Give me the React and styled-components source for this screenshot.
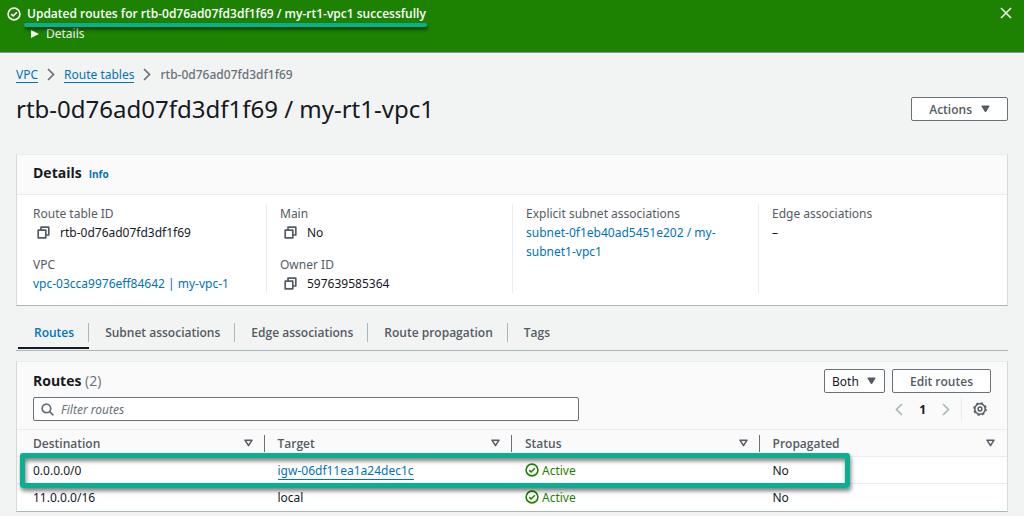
import React, { useState } from "react";
import styled, { createGlobalStyle } from "styled-components";

const boldFont = '"Open Sans", "Noto Sans", sans-serif';

const GlobalStyle = createGlobalStyle`
  * {
    box-sizing: border-box;
  }
  body {
    margin: 0;
    background: #f2f3f3;
    color: #16191f;
    font-family: "Noto Sans", "Open Sans", sans-serif;
    font-size: 12px;
    line-height: 19px;
  }
  button, input, select {
    font: inherit;
    color: inherit;
  }
  svg {
    display: block;
    flex: none;
  }
`;

const Banner = styled.header`
  display: flex;
  align-items: flex-start;
  gap: 6px;
  height: 53px;
  padding: 4px 12px 0 7px;
  background: #1d8102;
  border-bottom: 1px solid #879596;
  color: #fff;
  svg {
    margin-top: 3px;
  }
`;

const BannerBody = styled.div`
  flex: 1;
`;

const BannerTitle = styled.div`
  position: relative;
  width: fit-content;
  font-family: ${boldFont};
  font-weight: 600;
`;

const Underline = styled.span`
  position: absolute;
  left: -3px;
  right: -1px;
  top: 19px;
  height: 4px;
  border-radius: 2px;
  background: #0aae90;
  box-shadow: 1px 3px 3px rgba(0, 0, 0, 0.45);
`;

const PlainButton = styled.button`
  display: flex;
  align-items: center;
  padding: 0;
  border: 0;
  background: none;
  cursor: pointer;
`;

const DetailsToggle = styled(PlainButton)`
  gap: 7px;
  padding: 1px 0 0 4px;
  color: #f2f3f3;
  svg {
    margin-top: 0;
  }
`;

const Page = styled.main`
  padding: 12px 16px 4px;
`;

const Breadcrumbs = styled.nav`
  display: flex;
  align-items: center;
  gap: 9px;
  color: #687078;
  font-weight: 500;
`;

const Link = styled.a`
  color: #0073bb;
  text-decoration: none;
  font-weight: 400;
  border-bottom: ${({ $underlined }) => ($underlined ? "1px solid" : "0")};
  line-height: ${({ $underlined }) => ($underlined ? "15px" : "inherit")};
`;

const TitleRow = styled.div`
  display: flex;
  align-items: center;
  justify-content: space-between;
  height: 50px;
`;

const Title = styled.h1`
  margin: 0;
  font-size: 24px;
  line-height: 30px;
  font-weight: 400;
`;

const Button = styled.button`
  display: flex;
  align-items: center;
  justify-content: center;
  gap: 9px;
  height: 24px;
  padding: 0 17px;
  border: 1px solid #687078;
  border-radius: 2px;
  background: #fff;
  color: #545b64;
  font-family: ${boldFont};
  font-weight: 600;
  cursor: pointer;
`;

const Card = styled.section`
  background: #fff;
  border: 1px solid #d5dbdb;
  border-top-color: #eaeded;
  border-bottom-color: #aab7b8;
`;

const DetailsCard = styled(Card)`
  margin-top: 20px;
`;

const DetailsHeader = styled.div`
  display: flex;
  align-items: baseline;
  gap: 7px;
  padding: 8px 16px 10px;
  background: #fafafa;
  border-bottom: 1px solid #eaeded;
`;

const CardTitle = styled.h2`
  margin: 0;
  font-family: ${boldFont};
  font-size: 14px;
  line-height: 20px;
  font-weight: 700;
  span {
    color: #687078;
    font-weight: 400;
  }
`;

const InfoLink = styled(Link)`
  font-family: ${boldFont};
  font-size: 10px;
  font-weight: 700;
`;

const DetailsGrid = styled.div`
  display: grid;
  grid-template-columns: repeat(4, 1fr);
  padding: 9px 3px 12px;
`;

const Column = styled.dl`
  display: flex;
  flex-direction: column;
  gap: 13px;
  margin: 0;
  padding: 0 28px 0 13px;
  & + & {
    border-left: 1px solid #eaeded;
  }
  dt {
    color: #545b64;
  }
  dd {
    display: flex;
    align-items: center;
    margin: 0;
  }
`;

const CopyButton = styled(PlainButton)`
  margin: 0 10px 0 4px;
  color: #545b64;
`;

const Tabs = styled.div`
  display: flex;
  margin-top: 17px;
  padding-bottom: 1px;
  border-bottom: 1px solid #aab7b8;
`;

const Tab = styled.button`
  display: flex;
  padding: 0 0 5px;
  border: 0;
  border-bottom: 2px solid ${({ $active }) => ($active ? "#16191f" : "transparent")};
  margin-left: ${({ $active }) => ($active ? "2px" : "0")};
  background: none;
  color: ${({ $active }) => ($active ? "#0073bb" : "#545b64")};
  font-family: ${boldFont};
  font-weight: 600;
  cursor: pointer;
  span {
    padding: 0 14px 0 16px;
    border-right: 1px solid #aab7b8;
  }
  &:last-child span {
    border-right: 0;
  }
`;

const RoutesCard = styled(Card)`
  position: relative;
  margin-top: 10px;
`;

const RoutesHeader = styled.div`
  display: grid;
  grid-template-columns: 1fr auto;
  row-gap: 4px;
  align-items: center;
  padding: 7px 16px 8px;
  background: #fafafa;
`;

const Actions = styled.div`
  display: flex;
  justify-content: flex-end;
  gap: 7px;
`;

const SelectBox = styled.div`
  display: flex;
  align-items: center;
  width: 61px;
  height: 24px;
  svg {
    margin-left: -18px;
    pointer-events: none;
  }
`;

const Select = styled.select`
  appearance: none;
  flex: none;
  width: 100%;
  height: 100%;
  padding: 0 20px 0 7px;
  border: 1px solid #687078;
  border-radius: 2px;
  background: #fff;
`;

const SearchBox = styled.label`
  display: flex;
  align-items: center;
  gap: 7px;
  width: 69%;
  height: 24px;
  padding: 0 7px;
  border: 1px solid #687078;
  border-radius: 2px;
  background: #fff;
  color: #687078;
`;

const SearchInput = styled.input`
  flex: 1;
  min-width: 0;
  padding: 0;
  border: 0;
  outline: 0;
  background: none;
  &::placeholder {
    color: #687078;
    font-style: italic;
    opacity: 1;
  }
`;

const Pagination = styled.div`
  display: flex;
  align-items: center;
  justify-content: flex-end;
  gap: 16px;
  color: #aab7b8;
`;

const PageNumber = styled(PlainButton)`
  color: #16191f;
  font-weight: 700;
`;

const Settings = styled(PlainButton)`
  height: 24px;
  margin-left: -5px;
  padding: 0 4px 0 11px;
  border-left: 1px solid #eaeded;
  color: #545b64;
`;

const Table = styled.table`
  width: 100%;
  table-layout: fixed;
  border-collapse: collapse;
  th, td {
    height: 27px;
    padding: 0 0 0 13px;
    text-align: left;
  }
  th:first-child, td:first-child {
    padding-left: 16px;
  }
  th {
    background: #fafafa;
    border-top: 1px solid #eaeded;
    color: #545b64;
    font-family: ${boldFont};
    font-weight: 600;
  }
  td {
    border-top: 1px solid #eaeded;
  }
`;

const HeadCell = styled.div`
  display: flex;
  align-items: center;
  justify-content: space-between;
  height: 17px;
  padding-right: 11px;
  border-right: 1px solid ${({ $last }) => ($last ? "transparent" : "#687078")};
`;

const Status = styled.span`
  display: flex;
  align-items: center;
  gap: 3px;
  color: #1d8102;
`;

const Highlight = styled.div`
  position: absolute;
  left: 3px;
  right: 157px;
  bottom: 23px;
  height: 35px;
  border: 5px solid #0aae90;
  border-radius: 3px;
  box-shadow: 1px 3px 4px rgba(0, 0, 0, 0.5), inset 1px 3px 4px rgba(0, 0, 0, 0.5);
  pointer-events: none;
`;

const CheckIcon = () => (
  <svg width="14" height="14" viewBox="0 0 14 14" fill="none" stroke="currentColor" strokeWidth="1.6">
    <circle cx="7" cy="7" r="5.9" />
    <path d="M4.2 7.1l2 1.9 3.6-3.7" />
  </svg>
);

const CloseIcon = () => (
  <svg width="12" height="12" viewBox="0 0 12 12" fill="none" stroke="#f2f3f3" strokeWidth="1.6">
    <path d="M1 1l10 10M11 1L1 11" />
  </svg>
);

const ChevronIcon = ({ left }) => (
  <svg width="8" height="13" viewBox="0 0 8 13" fill="none" stroke="currentColor" strokeWidth="1.7">
    <path d={left ? "M7 1L1.5 6.5 7 12" : "M1 1l5.5 5.5L1 12"} />
  </svg>
);

const CaretIcon = () => (
  <svg width="9" height="8" viewBox="0 0 9 8" fill="#545b64" stroke="#545b64" strokeLinejoin="round">
    <path d="M.8 1h7.4L4.5 7z" />
  </svg>
);

const ExpandIcon = () => (
  <svg width="8" height="8" viewBox="0 0 8 8" fill="currentColor">
    <path d="M0 0l8 4-8 4z" />
  </svg>
);

const SortIcon = () => (
  <svg width="9" height="8" viewBox="0 0 9 8" fill="none" stroke="#545b64" strokeWidth="1.5" strokeLinejoin="round">
    <path d="M1 1.2h7L4.5 6.6z" />
  </svg>
);

const CopyIcon = () => (
  <svg width="13" height="13" viewBox="0 0 13 13" fill="none" stroke="currentColor" strokeWidth="1.7" strokeLinejoin="round">
    <path d="M1.2 4.2h7.6v7.6H1.2z" />
    <path d="M4 4V1.2h7.8V9H9" />
  </svg>
);

const SearchIcon = () => (
  <svg width="13" height="13" viewBox="0 0 13 13" fill="none" stroke="currentColor" strokeWidth="1.7">
    <circle cx="5.4" cy="5.4" r="4.3" />
    <path d="M8.4 8.4l4 4" />
  </svg>
);

const GearIcon = () => (
  <svg width="14" height="14" viewBox="0 0 14 14" fill="none" stroke="currentColor">
    <circle cx="7" cy="7" r="5.2" strokeWidth="1.5" />
    <circle cx="7" cy="7" r="6.2" strokeWidth="1.3" strokeDasharray="2.4 2.47" />
    <circle cx="7" cy="7" r="1.9" strokeWidth="1.5" />
  </svg>
);

const tabs = ["Routes", "Subnet associations", "Edge associations", "Route propagation", "Tags"];

const headings = ["Destination", "Target", "Status", "Propagated"];

const routes = [
  { destination: "0.0.0.0/0", target: "igw-06df11ea1a24dec1c", linked: true },
  { destination: "11.0.0.0/16", target: "local" },
];

const Field = ({ label, copy, children }) => (
  <div>
    <dt>{label}</dt>
    <dd>
      {copy && (
        <CopyButton aria-label={`Copy ${label}`}>
          <CopyIcon />
        </CopyButton>
      )}
      {children}
    </dd>
  </div>
);

const App = () => {
  const [activeTab, setActiveTab] = useState("Routes");
  const [filter, setFilter] = useState("");

  return (
    <>
      <GlobalStyle />
      <Banner>
        <CheckIcon />
        <BannerBody>
          <BannerTitle>
            Updated routes for rtb-0d76ad07fd3df1f69 / my-rt1-vpc1 successfully
            <Underline />
          </BannerTitle>
          <DetailsToggle>
            <ExpandIcon />
            Details
          </DetailsToggle>
        </BannerBody>
        <PlainButton aria-label="Dismiss">
          <CloseIcon />
        </PlainButton>
      </Banner>

      <Page>
        <Breadcrumbs>
          <Link href="#vpc" $underlined>VPC</Link>
          <ChevronIcon />
          <Link href="#tables" $underlined>Route tables</Link>
          <ChevronIcon />
          <span>rtb-0d76ad07fd3df1f69</span>
        </Breadcrumbs>

        <TitleRow>
          <Title>rtb-0d76ad07fd3df1f69 / my-rt1-vpc1</Title>
          <Button>
            Actions <CaretIcon />
          </Button>
        </TitleRow>

        <DetailsCard>
          <DetailsHeader>
            <CardTitle>Details</CardTitle>
            <InfoLink href="#info">Info</InfoLink>
          </DetailsHeader>
          <DetailsGrid>
            <Column>
              <Field label="Route table ID" copy>rtb-0d76ad07fd3df1f69</Field>
              <Field label="VPC">
                <Link href="#vpc">vpc-03cca9976eff84642 | my-vpc-1</Link>
              </Field>
            </Column>
            <Column>
              <Field label="Main" copy>No</Field>
              <Field label="Owner ID" copy>597639585364</Field>
            </Column>
            <Column>
              <Field label="Explicit subnet associations">
                <Link href="#subnet">subnet-0f1eb40ad5451e202 / my-subnet1-vpc1</Link>
              </Field>
            </Column>
            <Column>
              <Field label="Edge associations">–</Field>
            </Column>
          </DetailsGrid>
        </DetailsCard>

        <Tabs role="tablist">
          {tabs.map((tab) => (
            <Tab
              key={tab}
              role="tab"
              aria-selected={tab === activeTab}
              $active={tab === activeTab}
              onClick={() => setActiveTab(tab)}
            >
              <span>{tab}</span>
            </Tab>
          ))}
        </Tabs>

        <RoutesCard>
          <RoutesHeader>
            <CardTitle>
              Routes <span>(2)</span>
            </CardTitle>
            <Actions>
              <SelectBox>
                <Select aria-label="Route type" defaultValue="Both">
                  <option>Both</option>
                </Select>
                <CaretIcon />
              </SelectBox>
              <Button>Edit routes</Button>
            </Actions>
            <SearchBox>
              <SearchIcon />
              <SearchInput
                aria-label="Filter routes"
                placeholder="Filter routes"
                value={filter}
                onChange={(e) => setFilter(e.target.value)}
              />
            </SearchBox>
            <Pagination>
              <PlainButton aria-label="Previous page">
                <ChevronIcon left />
              </PlainButton>
              <PageNumber>1</PageNumber>
              <PlainButton aria-label="Next page">
                <ChevronIcon />
              </PlainButton>
              <Settings aria-label="Preferences">
                <GearIcon />
              </Settings>
            </Pagination>
          </RoutesHeader>
          <Table>
            <thead>
              <tr>
                {headings.map((heading, index) => (
                  <th key={heading}>
                    <HeadCell $last={index === headings.length - 1}>
                      {heading}
                      <SortIcon />
                    </HeadCell>
                  </th>
                ))}
              </tr>
            </thead>
            <tbody>
              {routes.map(({ destination, target, linked }) => (
                <tr key={destination}>
                  <td>{destination}</td>
                  <td>{linked ? <Link href="#igw" $underlined>{target}</Link> : target}</td>
                  <td>
                    <Status>
                      <CheckIcon />
                      Active
                    </Status>
                  </td>
                  <td>No</td>
                </tr>
              ))}
            </tbody>
          </Table>
          <Highlight />
        </RoutesCard>
      </Page>
    </>
  );
};

export default App;
